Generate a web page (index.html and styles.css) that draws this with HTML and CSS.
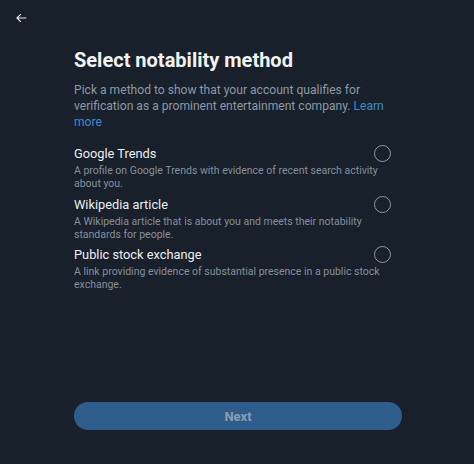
FILE: index.html
```html
<!DOCTYPE html>
<html lang="en">
<head>
<meta charset="utf-8">
<link rel="stylesheet" href="styles.css">
</head>
<body>
<div class="page">
  <div class="topbar">
    <svg class="back" viewBox="0 0 24 24" width="14" height="14" aria-hidden="true"><path d="M7.414 13l5.043 5.04-1.414 1.42L3.586 12l7.457-7.46 1.414 1.42L7.414 11H21v2H7.414z" fill="#e7e9ea"/></svg>
  </div>
  <main class="content">
    <h1 class="title">Select notability method</h1>
    <p class="subtitle">Pick a method to show that your account qualifies for verification as a prominent entertainment company. <a class="link" href="#">Learn more</a></p>
    <div class="options">
      <div class="option">
        <div class="opt-head">
          <div class="opt-title">Google Trends</div>
          <span class="radio"></span>
        </div>
        <div class="opt-desc">A profile on Google Trends with evidence of recent search activity about you.</div>
      </div>
      <div class="option">
        <div class="opt-head">
          <div class="opt-title">Wikipedia article</div>
          <span class="radio"></span>
        </div>
        <div class="opt-desc">A Wikipedia article that is about you and meets their notability standards for people.</div>
      </div>
      <div class="option">
        <div class="opt-head">
          <div class="opt-title">Public stock exchange</div>
          <span class="radio"></span>
        </div>
        <div class="opt-desc">A link providing evidence of substantial presence in a public stock exchange.</div>
      </div>
    </div>
    <button class="next" type="button">Next</button>
  </main>
</div>
</body>
</html>
```
FILE: styles.css
```css
* { box-sizing: border-box; }
html, body { margin: 0; padding: 0; }
body {
  background: #18202b;
  font-family: "Roboto", "Liberation Sans", sans-serif;
  color: #e7e9ea;
}
.page {
  width: 474px;
  height: 464px;
  display: flex;
  flex-direction: column;
}
.topbar {
  height: 36px;
  padding: 11px 0 0 14px;
}
.back { display: block; }
.content {
  flex: 1;
  display: flex;
  flex-direction: column;
  padding: 0 72px 34px 74px;
}
.title {
  margin: 11px 0 0;
  font-size: 20px;
  line-height: 26px;
  font-weight: 700;
  color: #f2f3f4;
}
.subtitle {
  margin: 9px 0 0;
  font-size: 12.1px;
  line-height: 16px;
  color: #8b98a5;
}
.link { color: #3a8ad0; text-decoration: none; }
.options {
  margin-top: 15px;
  display: flex;
  flex-direction: column;
}
.option {
  height: 50.5px;
}
.opt-head {
  display: flex;
  align-items: center;
  height: 17px;
}
.opt-title {
  flex: 1;
  font-size: 12.8px;
  line-height: 17px;
  font-weight: 400;
  color: #eceef0;
}
.opt-desc {
  margin-top: 2px;
  font-size: 10.5px;
  line-height: 13px;
  color: #848f9b;
}
.radio {
  flex: none;
  width: 17px;
  height: 17px;
  margin-right: 11px;
  border: 1.5px solid #8b98a5;
  border-radius: 50%;
}
.next {
  margin-top: auto;
  height: 28px;
  border: none;
  border-radius: 14px;
  background: #2f5d8b;
  color: #8b9db2;
  font-family: inherit;
  font-size: 13px;
  font-weight: 700;
}
```
